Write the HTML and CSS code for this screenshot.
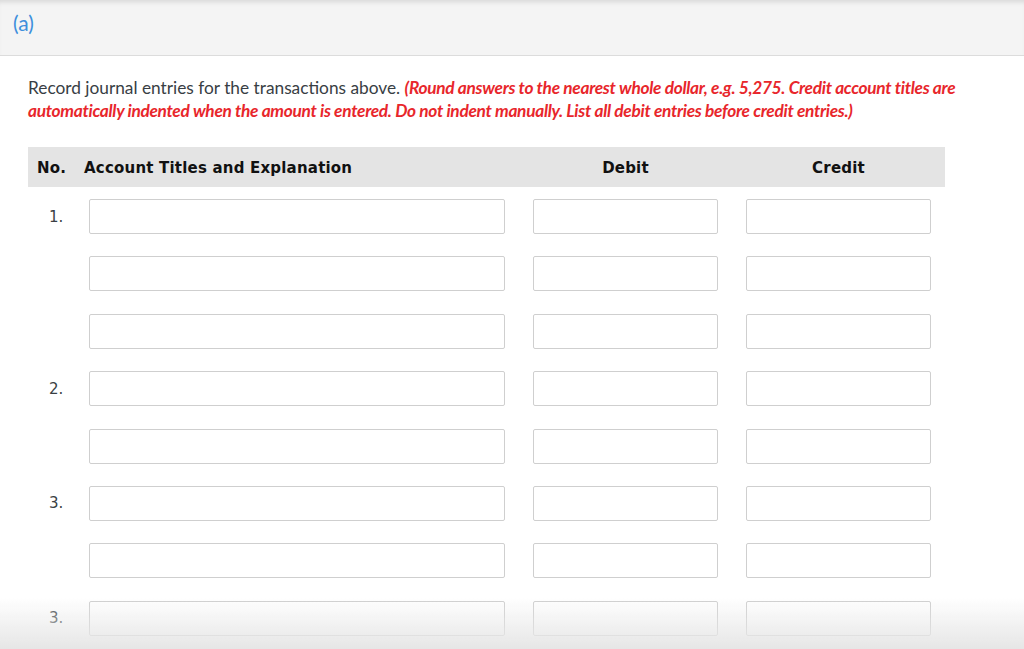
FILE: index.html
```html
<!DOCTYPE html>
<html lang="en">
<head>
    <meta charset="UTF-8">
    <title>Journal Entries</title>
    <link rel="stylesheet" href="styles.css">
</head>
<body>
    <!-- Part header -->
    <div class="part-header">
        <span class="part-label">(a)</span>
    </div>

    <div class="content">
        <p class="instructions">
            Record journal entries for the transactions above.
            <span class="note">(Round answers to the nearest whole dollar, e.g. 5,275. Credit account titles are automatically indented when the amount is entered. Do not indent manually. List all debit entries before credit entries.)</span>
        </p>

        <div class="journal">
            <div class="journal-head">
                <div class="col-no">No.</div>
                <div class="col-title">Account Titles and Explanation</div>
                <div class="col-amount">Debit</div>
                <div class="col-amount">Credit</div>
            </div>

            <div class="journal-rows">
                <div class="journal-row">
                    <div class="col-no">1.</div>
                    <div class="col-title"><input type="text" class="title-input"></div>
                    <div class="col-amount"><input type="text" class="amount-input"></div>
                    <div class="col-amount"><input type="text" class="amount-input"></div>
                </div>
                <div class="journal-row">
                    <div class="col-no"></div>
                    <div class="col-title"><input type="text" class="title-input"></div>
                    <div class="col-amount"><input type="text" class="amount-input"></div>
                    <div class="col-amount"><input type="text" class="amount-input"></div>
                </div>
                <div class="journal-row">
                    <div class="col-no"></div>
                    <div class="col-title"><input type="text" class="title-input"></div>
                    <div class="col-amount"><input type="text" class="amount-input"></div>
                    <div class="col-amount"><input type="text" class="amount-input"></div>
                </div>
                <div class="journal-row">
                    <div class="col-no">2.</div>
                    <div class="col-title"><input type="text" class="title-input"></div>
                    <div class="col-amount"><input type="text" class="amount-input"></div>
                    <div class="col-amount"><input type="text" class="amount-input"></div>
                </div>
                <div class="journal-row">
                    <div class="col-no"></div>
                    <div class="col-title"><input type="text" class="title-input"></div>
                    <div class="col-amount"><input type="text" class="amount-input"></div>
                    <div class="col-amount"><input type="text" class="amount-input"></div>
                </div>
                <div class="journal-row">
                    <div class="col-no">3.</div>
                    <div class="col-title"><input type="text" class="title-input"></div>
                    <div class="col-amount"><input type="text" class="amount-input"></div>
                    <div class="col-amount"><input type="text" class="amount-input"></div>
                </div>
                <div class="journal-row">
                    <div class="col-no"></div>
                    <div class="col-title"><input type="text" class="title-input"></div>
                    <div class="col-amount"><input type="text" class="amount-input"></div>
                    <div class="col-amount"><input type="text" class="amount-input"></div>
                </div>
                <div class="journal-row">
                    <div class="col-no">3.</div>
                    <div class="col-title"><input type="text" class="title-input"></div>
                    <div class="col-amount"><input type="text" class="amount-input"></div>
                    <div class="col-amount"><input type="text" class="amount-input"></div>
                </div>
            </div>
        </div>
    </div>

    <!-- fade at the bottom of the scroll area -->
    <div class="bottom-fade"></div>
</body>
</html>
```

FILE: styles.css
```css
body {
    margin: 0;
    background-color: #fff;
    font-family: Lato, "Liberation Sans", sans-serif;
    overflow: hidden;
}

.part-header {
    height: 56px;
    background-color: #f4f4f4;
    border-bottom: 1px solid #dcdcdc;
    box-shadow: inset 0 5px 5px -3px rgba(0, 0, 0, 0.12);
    box-sizing: border-box;
    padding: 8px 0 0 13px;
}

.part-label {
    font-size: 21px;
    color: #3d8fdc;
    line-height: 30px;
}

.content {
    padding: 0 0 0 28px;
}

.instructions {
    width: 950px;
    margin: 20px 0 0;
    font-size: 17.3px;
    line-height: 23px;
    color: #383e44;
}

.note {
    color: #e8262b;
    font-weight: bold;
    font-style: italic;
    letter-spacing: -0.3px;
}

.journal {
    width: 917px;
    margin-top: 25px;
}

.journal-head, .journal-row {
    display: grid;
    grid-template-columns: 56px 435px 213px 213px;
    align-items: center;
}

.journal-head {
    height: 40px;
    padding-top: 2px;
    box-sizing: border-box;
    background-color: #e4e4e4;
    font-family: "DejaVu Sans", Verdana, sans-serif;
    font-weight: bold;
    font-size: 15px;
    letter-spacing: 0.2px;
    color: #111;
}

.journal-head .col-no {
    padding-left: 9px;
}

.journal-head .col-amount {
    text-align: center;
}

.journal-rows {
    display: flex;
    flex-direction: column;
    gap: 22.4px;
    padding-top: 12px;
}

.journal-row .col-no {
    font-family: "DejaVu Sans", Verdana, sans-serif;
    font-size: 15px;
    color: #3a3f44;
    padding-left: 21px;
}

.journal-row .col-title {
    padding-left: 5px;
}

.journal-row .col-amount {
    padding-left: 14px;
}

.title-input, .amount-input {
    display: block;
    box-sizing: border-box;
    height: 35px;
    margin: 0;
    border: 1px solid #cfcfcf;
    border-radius: 2px;
    background-color: #fff;
    font-size: 14px;
}

.title-input {
    width: 416px;
}

.amount-input {
    width: 185px;
}

.bottom-fade {
    position: fixed;
    left: 0;
    right: 0;
    bottom: 0;
    height: 52px;
    background: linear-gradient(to bottom, rgba(230, 230, 230, 0), rgba(230, 230, 230, 1));
    pointer-events: none;
}
```
